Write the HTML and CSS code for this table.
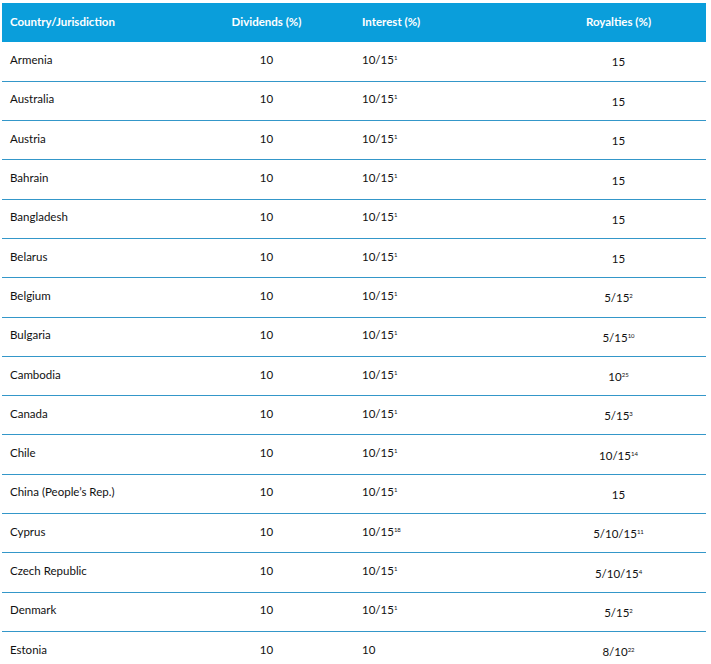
FILE: index.html
```html
<!DOCTYPE html>
<html>
<head>
<meta charset="utf-8">
<link rel="stylesheet" href="styles.css">
</head>
<body>
<table class="rates">
  <colgroup>
    <col class="c-country"><col class="c-div"><col class="c-int"><col class="c-roy">
  </colgroup>
  <thead>
    <tr><th class="country">Country/Jurisdiction</th><th class="div">Dividends (%)</th><th class="int">Interest (%)</th><th class="roy">Royalties (%)</th></tr>
  </thead>
  <tbody>
    <tr><td class="country">Armenia</td><td class="div">10</td><td class="int">10/15<sup>1</sup></td><td class="roy">15</td></tr>
    <tr><td class="country">Australia</td><td class="div">10</td><td class="int">10/15<sup>1</sup></td><td class="roy">15</td></tr>
    <tr><td class="country">Austria</td><td class="div">10</td><td class="int">10/15<sup>1</sup></td><td class="roy">15</td></tr>
    <tr><td class="country">Bahrain</td><td class="div">10</td><td class="int">10/15<sup>1</sup></td><td class="roy">15</td></tr>
    <tr><td class="country">Bangladesh</td><td class="div">10</td><td class="int">10/15<sup>1</sup></td><td class="roy">15</td></tr>
    <tr><td class="country">Belarus</td><td class="div">10</td><td class="int">10/15<sup>1</sup></td><td class="roy">15</td></tr>
    <tr><td class="country">Belgium</td><td class="div">10</td><td class="int">10/15<sup>1</sup></td><td class="roy">5/15<sup>2</sup></td></tr>
    <tr><td class="country">Bulgaria</td><td class="div">10</td><td class="int">10/15<sup>1</sup></td><td class="roy">5/15<sup>10</sup></td></tr>
    <tr><td class="country">Cambodia</td><td class="div">10</td><td class="int">10/15<sup>1</sup></td><td class="roy">10<sup>25</sup></td></tr>
    <tr><td class="country">Canada</td><td class="div">10</td><td class="int">10/15<sup>1</sup></td><td class="roy">5/15<sup>3</sup></td></tr>
    <tr><td class="country">Chile</td><td class="div">10</td><td class="int">10/15<sup>1</sup></td><td class="roy">10/15<sup>14</sup></td></tr>
    <tr><td class="country">China (People’s Rep.)</td><td class="div">10</td><td class="int">10/15<sup>1</sup></td><td class="roy">15</td></tr>
    <tr><td class="country">Cyprus</td><td class="div">10</td><td class="int">10/15<sup>18</sup></td><td class="roy">5/10/15<sup>11</sup></td></tr>
    <tr><td class="country">Czech Republic</td><td class="div">10</td><td class="int">10/15<sup>1</sup></td><td class="roy">5/10/15<sup>4</sup></td></tr>
    <tr><td class="country">Denmark</td><td class="div">10</td><td class="int">10/15<sup>1</sup></td><td class="roy">5/15<sup>2</sup></td></tr>
    <tr><td class="country">Estonia</td><td class="div">10</td><td class="int">10</td><td class="roy">8/10<sup>22</sup></td></tr>
  </tbody>
</table>
</body>
</html>
```
FILE: styles.css
```css
html, body {
  margin: 0;
  background: #ffffff;
}
body {
  padding: 3px 6px 0 2px;
  font-family: "Lato", "Liberation Sans", sans-serif;
  font-size: 11.5px;
  color: #111111;
}
.rates {
  width: 704px;
  border-collapse: collapse;
  table-layout: fixed;
}
.c-country { width: 198px; }
.c-div { width: 133px; }
.c-int { width: 198px; }
.c-roy { width: 175px; }
.rates thead tr {
  background: #0a9edb;
  height: 39px;
}
.rates th {
  color: #ffffff;
  font-weight: 700;
  padding: 0 8px 2px 8px;
  vertical-align: middle;
}
.rates tbody tr {
  height: 39.3px;
  border-bottom: 1.5px solid #3497c9;
}
.rates td {
  padding: 0 8px 4px 8px;
  vertical-align: middle;
}
.country { text-align: left; }
.div { text-align: center; }
.int { text-align: left; padding-left: 29px !important; }
.roy { text-align: center; }
td.roy { padding-top: 1px !important; padding-bottom: 0 !important; }
sup {
  font-size: 6px;
  vertical-align: 4px;
  line-height: 0;
}
```
